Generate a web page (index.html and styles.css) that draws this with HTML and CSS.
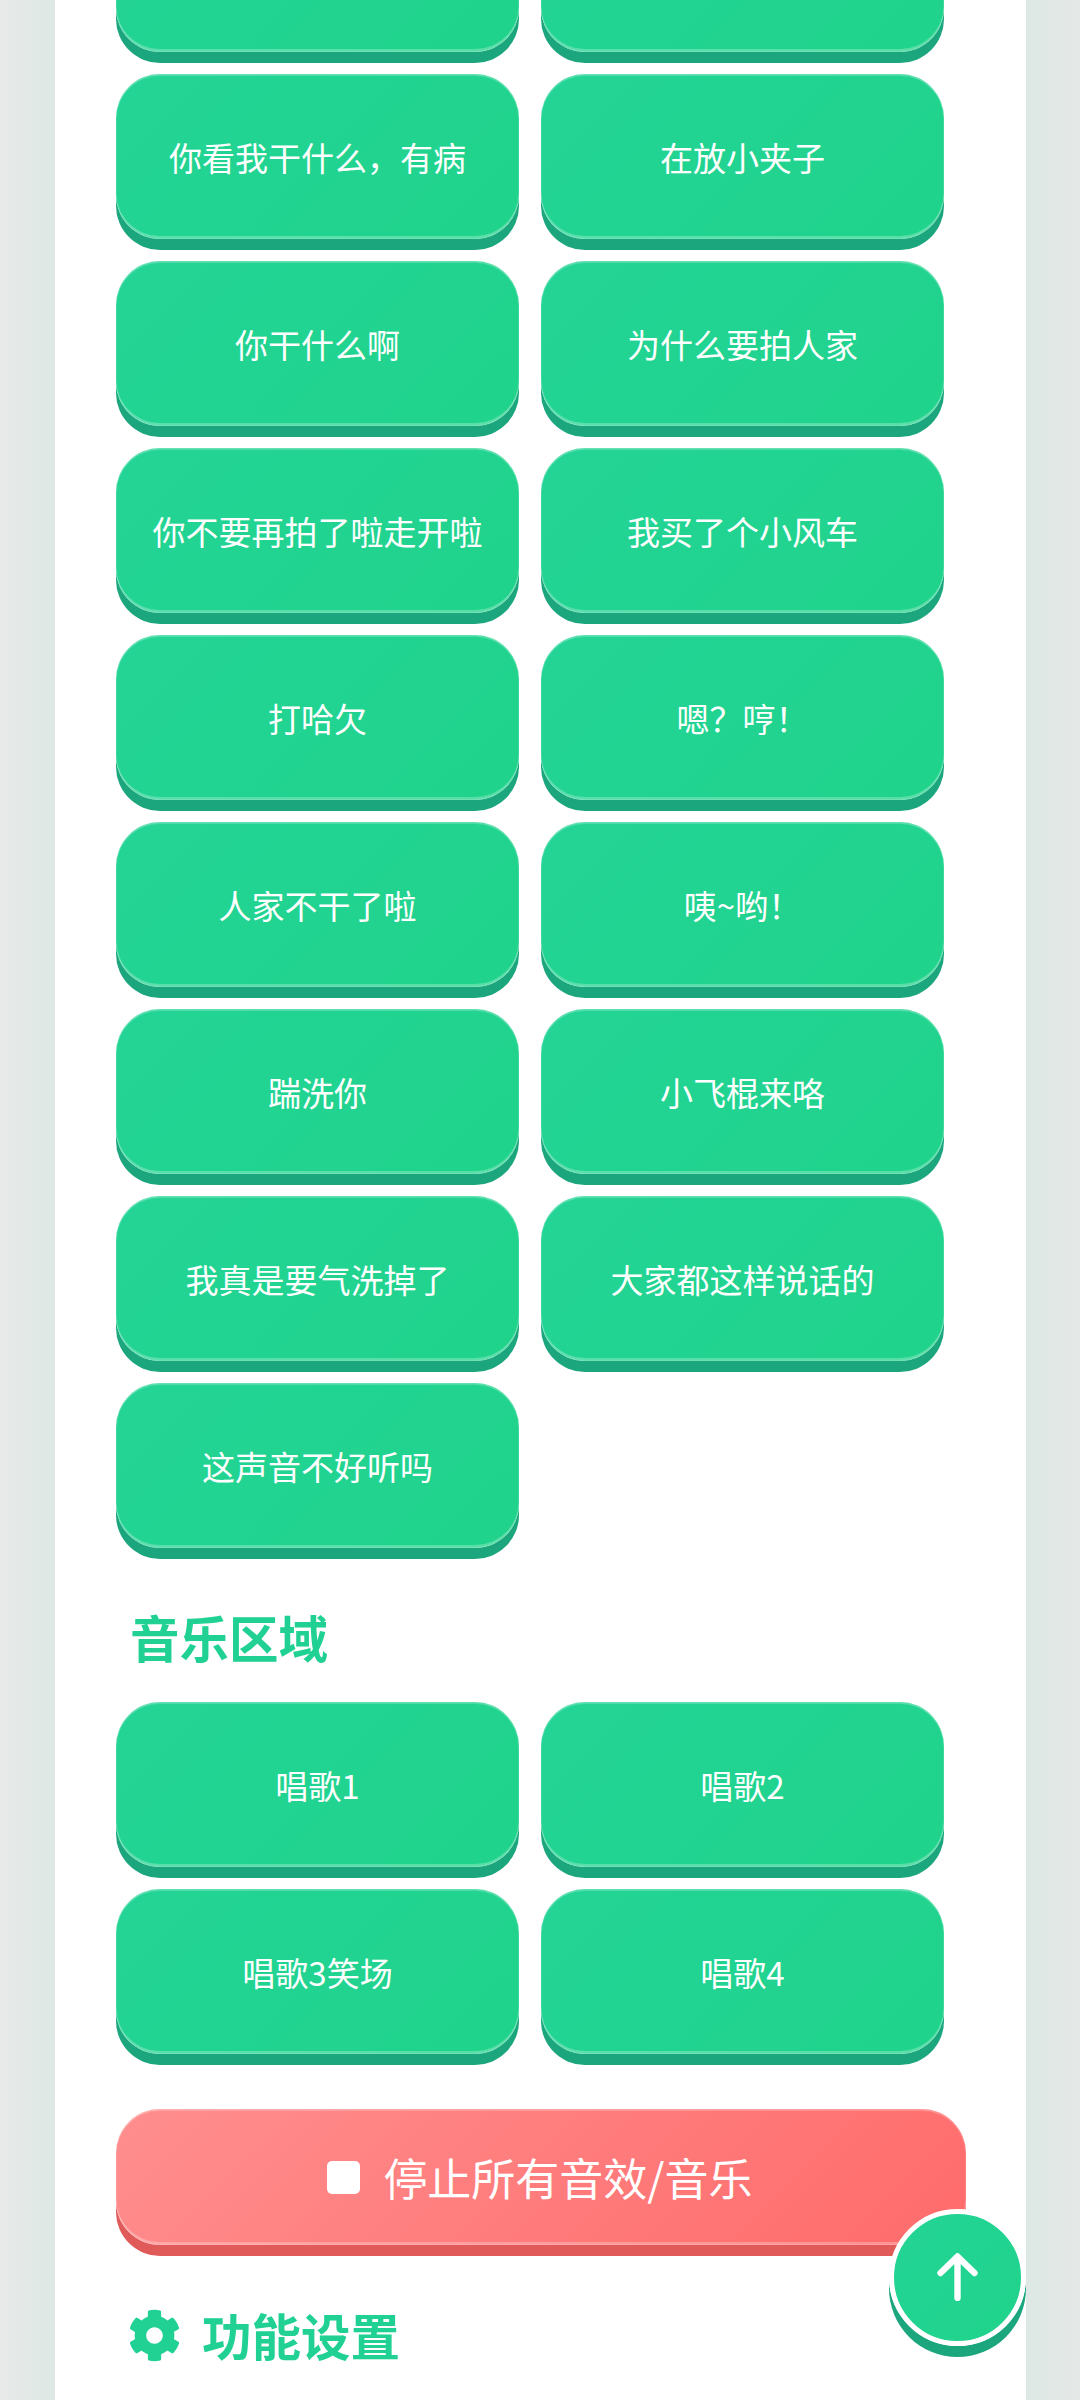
FILE: index.html
```html
<!DOCTYPE html>
<html lang="zh-CN">
<head>
  <meta charset="UTF-8">
  <title>音效板</title>
  <link rel="stylesheet" href="styles.css">
</head>
<body>
  <main class="card">
    <div class="sound-grid">
      <button class="sound-btn"></button>
      <button class="sound-btn"></button>
      <button class="sound-btn">你看我干什么，有病</button>
      <button class="sound-btn">在放小夹子</button>
      <button class="sound-btn">你干什么啊</button>
      <button class="sound-btn">为什么要拍人家</button>
      <button class="sound-btn">你不要再拍了啦走开啦</button>
      <button class="sound-btn">我买了个小风车</button>
      <button class="sound-btn">打哈欠</button>
      <button class="sound-btn">嗯？哼！</button>
      <button class="sound-btn">人家不干了啦</button>
      <button class="sound-btn">咦~哟！</button>
      <button class="sound-btn">踹洗你</button>
      <button class="sound-btn">小飞棍来咯</button>
      <button class="sound-btn">我真是要气洗掉了</button>
      <button class="sound-btn">大家都这样说话的</button>
      <button class="sound-btn">这声音不好听吗</button>
    </div>

    <h2 class="section-title music-title">音乐区域</h2>
    <div class="sound-grid">
      <button class="sound-btn">唱歌1</button>
      <button class="sound-btn">唱歌2</button>
      <button class="sound-btn">唱歌3笑场</button>
      <button class="sound-btn">唱歌4</button>
    </div>

    <button class="stop-btn">
      <svg class="stop-icon" viewBox="0 0 33 33"><rect width="33" height="33" rx="5" fill="#fff"/></svg>
      停止所有音效/音乐
    </button>

    <h2 class="section-title settings-title">
      <svg class="gear-icon" viewBox="0 0 512 512"><path fill="#20d193" d="M487.4 315.7l-42.6-24.6c4.3-23.2 4.3-47 0-70.2l42.6-24.6c4.9-2.8 7.1-8.6 5.5-14-11.1-35.6-30-67.8-54.7-94.6-3.8-4.1-10-5.1-14.8-2.3L380.8 110c-17.9-15.4-38.5-27.3-60.8-35.1V25.8c0-5.6-3.9-10.5-9.4-11.7-36.7-8.2-74.3-7.8-109.2 0-5.5 1.2-9.4 6.1-9.4 11.7V75c-22.2 7.9-42.8 19.8-60.8 35.1L88.7 85.5c-4.9-2.8-11-1.9-14.8 2.3-24.7 26.7-43.6 58.9-54.7 94.6-1.7 5.4.6 11.2 5.5 14L67.3 221c-4.3 23.2-4.3 47 0 70.2l-42.6 24.6c-4.9 2.8-7.1 8.6-5.5 14 11.1 35.6 30 67.8 54.7 94.6 3.8 4.1 10 5.1 14.8 2.3l42.6-24.6c17.9 15.4 38.5 27.3 60.8 35.1v49.2c0 5.6 3.9 10.5 9.4 11.7 36.7 8.2 74.3 7.8 109.2 0 5.5-1.2 9.4-6.1 9.4-11.7v-49.2c22.2-7.9 42.8-19.8 60.8-35.1l42.6 24.6c4.9 2.8 11 1.9 14.8-2.3 24.7-26.7 43.6-58.9 54.7-94.6 1.5-5.5-.7-11.3-5.6-14.1zM256 336c-44.1 0-80-35.9-80-80s35.9-80 80-80 80 35.9 80 80-35.9 80-80 80z"/></svg>
      功能设置
    </h2>
  </main>

  <button class="top-btn">
    <svg class="arrow-icon" viewBox="0 0 41 48"><path d="M20.5 45V4M3.5 20L20.5 3.5L37.5 20" fill="none" stroke="#fff" stroke-width="6.4" stroke-linecap="round" stroke-linejoin="round"/></svg>
  </button>
</body>
</html>
```

FILE: styles.css
```css
html, body {
  margin: 0;
  height: 2400px;
  overflow: hidden;
}

body {
  font-family: "Noto Sans CJK SC", "Noto Sans", sans-serif;
  background: linear-gradient(to right, #e8eaea 0, #dde8e4 5%, #dde8e4 95%, #e5e8e7 100%);
}

button {
  font-family: inherit;
  border: none;
  padding: 0;
}

.card {
  width: 850px;
  height: 2513px;
  margin: -113px 0 0 55px;
  padding: 0 60px 0 61px;
  background: #fff;
}

.sound-grid {
  display: grid;
  grid-template-columns: 403px 403px;
  gap: 22px;
}

.sound-btn {
  height: 165px;
  border-radius: 44px;
  color: #fff;
  font-size: 33px;
  background: linear-gradient(135deg, #23d496, #20d38b);
  box-shadow: 0 11px 0 #1ca67e, inset 0 -3px 0 rgba(255, 255, 255, 0.25), inset 0 2px 0 rgba(255, 255, 255, 0.2), inset 0 0 0 1px rgba(255, 255, 255, 0.12);
}

.section-title {
  display: flex;
  align-items: center;
  margin: 0;
  padding-left: 14px;
  color: #20d193;
  font-size: 49.5px;
  line-height: 66px;
  font-weight: 700;
}

.music-title {
  margin: 56px 0 32px;
}

.settings-title {
  margin-top: 57px;
}

.gear-icon {
  width: 53px;
  height: 53px;
  margin: 0 21px 0 -2px;
}

.stop-btn {
  display: flex;
  align-items: center;
  justify-content: center;
  width: 850px;
  height: 136px;
  margin-top: 55px;
  padding-right: 2px;
  border-radius: 44px;
  color: #fff;
  font-size: 44px;
  background: linear-gradient(135deg, #ff8e8e, #ff6b6b);
  box-shadow: 0 11px 0 #e05a5a, inset 0 -3px 0 rgba(255, 255, 255, 0.25), inset 0 2px 0 rgba(255, 255, 255, 0.2), inset 0 0 0 1px rgba(255, 255, 255, 0.12);
}

.stop-icon {
  width: 33px;
  height: 33px;
  margin-right: 23px;
}

.top-btn {
  position: fixed;
  right: 54px;
  bottom: 54px;
  display: flex;
  align-items: center;
  justify-content: center;
  width: 137.5px;
  height: 137.5px;
  border: 5.5px solid #fff;
  border-radius: 50%;
  background: linear-gradient(135deg, #23d496, #20d38b);
  box-shadow: 0 11px 0 #1ca67e;
}

.arrow-icon {
  width: 41px;
  height: 48px;
}
```
